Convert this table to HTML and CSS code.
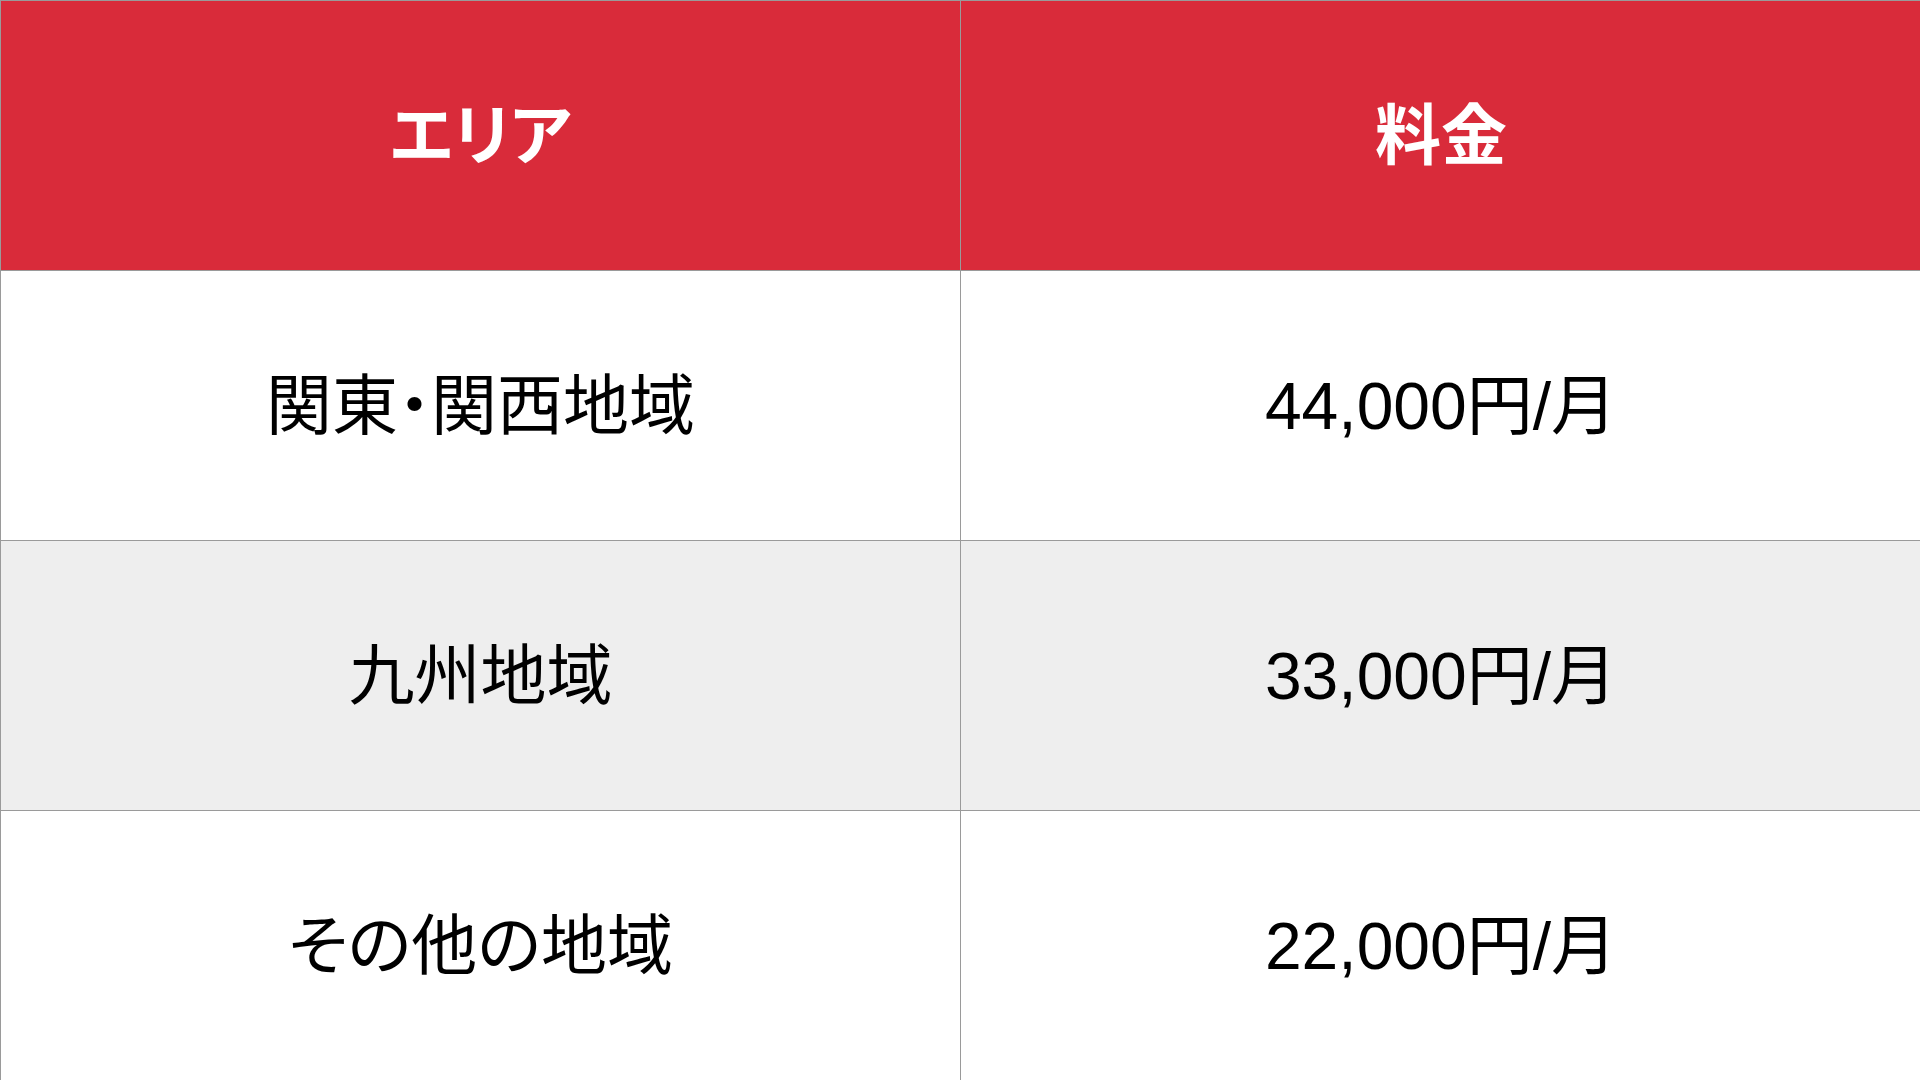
FILE: index.html
```html
<!DOCTYPE html>
<html lang="ja">
<head>
<meta charset="utf-8">
<title>料金表</title>
<link rel="stylesheet" href="styles.css">
</head>
<body>
<div class="table">
  <div class="cell head">エリア</div>
  <div class="cell head">料金</div>
  <div class="cell">関東・関西地域</div>
  <div class="cell">44,000円/月</div>
  <div class="cell alt">九州地域</div>
  <div class="cell alt">33,000円/月</div>
  <div class="cell">その他の地域</div>
  <div class="cell">22,000円/月</div>
</div>
</body>
</html>
```
FILE: styles.css
```css
html, body {
  margin: 0;
  padding: 0;
  background: #ffffff;
  overflow: hidden;
}
.table {
  display: grid;
  grid-template-columns: 960px 961px;
  grid-auto-rows: 270px;
  width: 1921px;
}
.cell {
  display: flex;
  align-items: center;
  justify-content: center;
  border-left: 1px solid #9a9a9a;
  border-top: 1px solid #9a9a9a;
  font-family: "Liberation Sans", "Noto Sans CJK JP", sans-serif;
  font-feature-settings: "palt";
  font-size: 66px;
  line-height: 1;
  color: #000000;
  background: #ffffff;
  box-sizing: border-box;
}
.head {
  background: #d92b3a;
  color: #ffffff;
  font-weight: 700;
}
.alt {
  background: #eeeeee;
}
```
